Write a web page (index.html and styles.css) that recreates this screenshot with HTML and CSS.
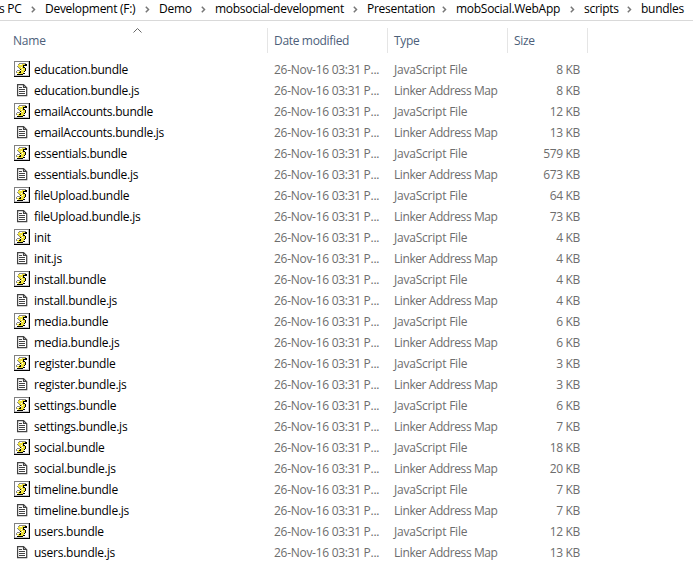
FILE: index.html
```html
<!DOCTYPE html>
<html lang="en">
<head>
<meta charset="utf-8">
<title>bundles</title>
<link rel="stylesheet" href="styles.css">
</head>
<body>
<svg class="symbols" aria-hidden="true">
  <symbol id="script" viewBox="0 0 16 16">
    <path fill="#fff" d="M0 0h16v16H0z"/>
    <path fill="#808080" d="M0 0h16v1H1v15H0z"/>
    <path fill="#000" d="M15 0h1v16H0v-1h15z"/>
    <path fill="#c8c8c8" d="M14 1h1v14H1v-1h13z"/>
    <path fill="#888" d="M5 2h7v1H5zM4 3h1v2H4zM3 5h1v1H3zM4 6h1v1H4zM5 7h1v1H5zM3 9h3v1H3zM2 10h1v2H2z"/>
    <path fill="#eee03a" d="M5 3h6v1H5zM4 4h5v2H4zM5 6h4v1H5zM6 7h5v1H6zM7 8h4v2H7zM3 10h7v1H3zM3 11h7v1H3zM4 12h5v1H4z"/>
    <path fill="#000" d="M11 3h2v1h-2zM12 4h1v1h-1zM9 4h3v1H9zM9 5h1v1H9zM9 6h2v1H9zM11 7h1v3h-1zM10 10h1v1h-1zM9 12h2v1H9zM3 13h6v1H3zM6 10h1v1H6zM5 11h2v1H5zM6 8h1v1H6z"/>
    <path fill="#fff" d="M6 3h2v1H6zM7 6h1v1H7zM8 8h1v1H8zM3 10h2v1H3z"/>
  </symbol>
  <symbol id="doc" viewBox="0 0 16 16">
    <path fill="#fff" stroke="#444" stroke-width="1.250" d="M3.600 2.500h5.900l3.200 3.200v7.900H3.600z"/>
    <path fill="none" stroke="#444" stroke-width="1.150" d="M9.500 2.500v3h3M5 5.500h3M5 7.500h6M5 9.500h6M5 11.500h6"/>
  </symbol>
  <symbol id="chevron" viewBox="0 0 5 7"><path fill="none" stroke="#777" stroke-width="1.500" d="M.8 .8l2.700 2.700L.8 6.200"/></symbol>
</svg>
<nav class="path">
  <span class="crumb">s PC<svg><use href="#chevron"/></svg></span>
  <span class="crumb">Development (F:)<svg><use href="#chevron"/></svg></span>
  <span class="crumb">Demo<svg><use href="#chevron"/></svg></span>
  <span class="crumb">mobsocial-development<svg><use href="#chevron"/></svg></span>
  <span class="crumb">Presentation<svg><use href="#chevron"/></svg></span>
  <span class="crumb">mobSocial.WebApp<svg><use href="#chevron"/></svg></span>
  <span class="crumb">scripts<svg><use href="#chevron"/></svg></span>
  <span class="crumb">bundles</span>
</nav>
<header class="columns">
  <span class="head name">Name<svg class="sort" viewBox="0 0 9 5"><path fill="none" stroke="#666" d="M.5 4.500l4-4 4 4"/></svg></span>
  <span class="head">Date modified</span>
  <span class="head">Type</span>
  <span class="head">Size</span>
</header>
<main class="files">
  <div class="row"><svg><use href="#script"/></svg><span class="file">education.bundle</span><span class="date">26-Nov-16 03:31 P...</span><span class="type js">JavaScript File</span><span class="size">8 KB</span></div>
  <div class="row"><svg><use href="#doc"/></svg><span class="file">education.bundle.js</span><span class="date">26-Nov-16 03:31 P...</span><span class="type">Linker Address Map</span><span class="size">8 KB</span></div>
  <div class="row"><svg><use href="#script"/></svg><span class="file">emailAccounts.bundle</span><span class="date">26-Nov-16 03:31 P...</span><span class="type js">JavaScript File</span><span class="size">12 KB</span></div>
  <div class="row"><svg><use href="#doc"/></svg><span class="file">emailAccounts.bundle.js</span><span class="date">26-Nov-16 03:31 P...</span><span class="type">Linker Address Map</span><span class="size">13 KB</span></div>
  <div class="row"><svg><use href="#script"/></svg><span class="file">essentials.bundle</span><span class="date">26-Nov-16 03:31 P...</span><span class="type js">JavaScript File</span><span class="size">579 KB</span></div>
  <div class="row"><svg><use href="#doc"/></svg><span class="file">essentials.bundle.js</span><span class="date">26-Nov-16 03:31 P...</span><span class="type">Linker Address Map</span><span class="size">673 KB</span></div>
  <div class="row"><svg><use href="#script"/></svg><span class="file">fileUpload.bundle</span><span class="date">26-Nov-16 03:31 P...</span><span class="type js">JavaScript File</span><span class="size">64 KB</span></div>
  <div class="row"><svg><use href="#doc"/></svg><span class="file">fileUpload.bundle.js</span><span class="date">26-Nov-16 03:31 P...</span><span class="type">Linker Address Map</span><span class="size">73 KB</span></div>
  <div class="row"><svg><use href="#script"/></svg><span class="file">init</span><span class="date">26-Nov-16 03:31 P...</span><span class="type js">JavaScript File</span><span class="size">4 KB</span></div>
  <div class="row"><svg><use href="#doc"/></svg><span class="file">init.js</span><span class="date">26-Nov-16 03:31 P...</span><span class="type">Linker Address Map</span><span class="size">4 KB</span></div>
  <div class="row"><svg><use href="#script"/></svg><span class="file">install.bundle</span><span class="date">26-Nov-16 03:31 P...</span><span class="type js">JavaScript File</span><span class="size">4 KB</span></div>
  <div class="row"><svg><use href="#doc"/></svg><span class="file">install.bundle.js</span><span class="date">26-Nov-16 03:31 P...</span><span class="type">Linker Address Map</span><span class="size">4 KB</span></div>
  <div class="row"><svg><use href="#script"/></svg><span class="file">media.bundle</span><span class="date">26-Nov-16 03:31 P...</span><span class="type js">JavaScript File</span><span class="size">6 KB</span></div>
  <div class="row"><svg><use href="#doc"/></svg><span class="file">media.bundle.js</span><span class="date">26-Nov-16 03:31 P...</span><span class="type">Linker Address Map</span><span class="size">6 KB</span></div>
  <div class="row"><svg><use href="#script"/></svg><span class="file">register.bundle</span><span class="date">26-Nov-16 03:31 P...</span><span class="type js">JavaScript File</span><span class="size">3 KB</span></div>
  <div class="row"><svg><use href="#doc"/></svg><span class="file">register.bundle.js</span><span class="date">26-Nov-16 03:31 P...</span><span class="type">Linker Address Map</span><span class="size">3 KB</span></div>
  <div class="row"><svg><use href="#script"/></svg><span class="file">settings.bundle</span><span class="date">26-Nov-16 03:31 P...</span><span class="type js">JavaScript File</span><span class="size">6 KB</span></div>
  <div class="row"><svg><use href="#doc"/></svg><span class="file">settings.bundle.js</span><span class="date">26-Nov-16 03:31 P...</span><span class="type">Linker Address Map</span><span class="size">7 KB</span></div>
  <div class="row"><svg><use href="#script"/></svg><span class="file">social.bundle</span><span class="date">26-Nov-16 03:31 P...</span><span class="type js">JavaScript File</span><span class="size">18 KB</span></div>
  <div class="row"><svg><use href="#doc"/></svg><span class="file">social.bundle.js</span><span class="date">26-Nov-16 03:31 P...</span><span class="type">Linker Address Map</span><span class="size">20 KB</span></div>
  <div class="row"><svg><use href="#script"/></svg><span class="file">timeline.bundle</span><span class="date">26-Nov-16 03:31 P...</span><span class="type js">JavaScript File</span><span class="size">7 KB</span></div>
  <div class="row"><svg><use href="#doc"/></svg><span class="file">timeline.bundle.js</span><span class="date">26-Nov-16 03:31 P...</span><span class="type">Linker Address Map</span><span class="size">7 KB</span></div>
  <div class="row"><svg><use href="#script"/></svg><span class="file">users.bundle</span><span class="date">26-Nov-16 03:31 P...</span><span class="type js">JavaScript File</span><span class="size">12 KB</span></div>
  <div class="row"><svg><use href="#doc"/></svg><span class="file">users.bundle.js</span><span class="date">26-Nov-16 03:31 P...</span><span class="type">Linker Address Map</span><span class="size">13 KB</span></div>
</main>
</body>
</html>
```
FILE: styles.css
```css
* { box-sizing: border-box; }
body {
  margin: 0;
  background: #fff;
  color: #000;
  font: 12px/20px "Open Sans", "Noto Sans", sans-serif;
  overflow: hidden;
  white-space: nowrap;
}
.symbols { display: none; }

.path {
  display: grid;
  grid-template-columns: 45px 114px 56px 152px 89px 128px 57px 52px;
  height: 21px;
  line-height: 18px;
  border-bottom: 1px solid #d9d9d9;
}
.crumb {
  display: flex;
  justify-content: space-between;
  letter-spacing: -0.28px;
}
.crumb svg { width: 5px; height: 7px; margin: 6px 9px 0 0; flex: none; }
.crumb:first-child { text-indent: -1px; }

.columns {
  display: grid;
  grid-template-columns: 268px 120px 120px 80px;
  height: 38px;
  padding: 7px 0 6px;
  color: #4c607a;
}
.head {
  position: relative;
  border-right: 1px solid #e5e5e5;
  padding-left: 6px;
  line-height: 25px;
  letter-spacing: -0.33px;
}
.head.name { padding-left: 13px; letter-spacing: -0.2px; }
.sort { position: absolute; left: 133px; top: 0; width: 9px; height: 5px; }

.row {
  display: grid;
  grid-template-columns: 20px 240px 120px 120px 66px;
  height: 21px;
  padding-left: 14px;
  line-height: 21px;
  color: #6d6d6d;
}
.row svg { width: 16px; height: 16px; margin-top: 2px; }
.file { color: #000; letter-spacing: -0.25px; }
.date { letter-spacing: -0.29px; }
.type { letter-spacing: -0.42px; }
.type.js { letter-spacing: -0.22px; }
.size { text-align: right; letter-spacing: -0.35px; }
```
